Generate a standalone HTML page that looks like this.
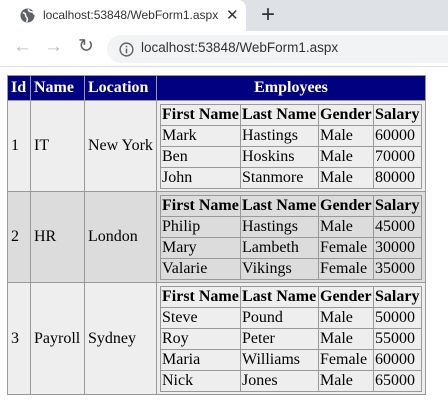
<!DOCTYPE html>
<html><head><style>
*{box-sizing:border-box}
body{margin:0;width:448px;height:405px;overflow:hidden;background:#fff;font-family:"Liberation Serif",serif;font-size:16px;position:relative}
.tabbar{position:absolute;left:0;top:0;width:448px;height:31px;background:#dee1e6}
.tab{position:absolute;left:0;top:0;width:246px;height:31px;background:#fff;border-radius:0 8px 0 0}
.toolbar{position:absolute;left:0;top:31px;width:448px;height:36px;background:#fff;border-bottom:1px solid #dadce0}
.omni{position:absolute;left:107px;top:4px;width:360px;height:28px;border-radius:14px;background:#f1f3f4}
.ui{font-family:"Liberation Sans",sans-serif;font-size:12px;color:#3c4043;position:absolute;white-space:nowrap}
table.o{position:absolute;left:7px;top:75px;border-collapse:collapse;table-layout:fixed;width:419px}
table.o td,table.o th{border:1px solid #999;padding:0 3px;text-align:left}
table.o th{background:#000080;color:#fff;height:25px;font-weight:bold}
.r1 td{background:#eee}.r2 td{background:#dcdcdc}
table.i{border-collapse:collapse;table-layout:fixed;width:262px;border:1px solid #999}
table.i td,table.i th{border:1px solid #999;padding:0 1px;height:21px;background:transparent;color:#000;text-align:left;line-height:18px;overflow:hidden}
table.i th{white-space:nowrap}
</style></head><body>
<div class="tabbar"><div class="tab"></div>
<svg style="position:absolute;left:20px;top:8px" width="15" height="15" viewBox="0 0 16 16"><circle cx="8" cy="8" r="7.5" fill="#5f6368"/><path d="M3 5c2 0 3 1 3 3s2 2 2 4l-1 3M9 1c0 2 1 3 3 3s3 2 3 3" stroke="#fff" stroke-width="1.6" fill="none"/></svg>
<div class="ui" style="left:43px;top:8px;color:#333">localhost:53848/WebForm1.aspx</div>
<div class="ui" style="left:226px;top:6px;font-size:15px;color:#333">✕</div>
<div class="ui" style="left:261px;top:1px;font-size:24px;color:#333">+</div>
</div>
<div class="toolbar"><div class="omni"></div>
<div class="ui" style="left:13px;top:5px;font-size:19px;color:#bbb">←</div>
<div class="ui" style="left:44px;top:5px;font-size:19px;color:#bbb">→</div>
<div class="ui" style="left:78px;top:4px;font-size:19px;color:#5f6368">↻</div>
<svg style="position:absolute;left:119px;top:11px" width="15" height="15" viewBox="0 0 16 16"><circle cx="8" cy="8" r="6.8" stroke="#5f6368" stroke-width="1.5" fill="none"/><rect x="7.2" y="7" width="1.6" height="5" fill="#5f6368"/><rect x="7.2" y="4" width="1.6" height="1.6" fill="#5f6368"/></svg>
<div class="ui" style="left:141px;top:9px;font-size:13.5px;color:#333">localhost:53848/WebForm1.aspx</div>
</div>
<table class="o">
<colgroup><col style="width:23px"><col style="width:54px"><col style="width:72px"><col></colgroup>
<tr><th>Id</th><th>Name</th><th>Location</th><th style="text-align:center">Employees</th></tr>
<tr class="r1" style="height:91px"><td>1</td><td>IT</td><td>New York</td><td>
<table class="i"><colgroup><col style="width:80px"><col style="width:78px"><col style="width:55px"><col></colgroup>
<tr><th>First Name</th><th>Last Name</th><th>Gender</th><th>Salary</th></tr>
<tr><td>Mark</td><td>Hastings</td><td>Male</td><td>60000</td></tr>
<tr><td>Ben</td><td>Hoskins</td><td>Male</td><td>70000</td></tr>
<tr><td>John</td><td>Stanmore</td><td>Male</td><td>80000</td></tr></table></td></tr>
<tr class="r2" style="height:91px"><td>2</td><td>HR</td><td>London</td><td>
<table class="i"><colgroup><col style="width:80px"><col style="width:78px"><col style="width:55px"><col></colgroup>
<tr><th>First Name</th><th>Last Name</th><th>Gender</th><th>Salary</th></tr>
<tr><td>Philip</td><td>Hastings</td><td>Male</td><td>45000</td></tr>
<tr><td>Mary</td><td>Lambeth</td><td>Female</td><td>30000</td></tr>
<tr><td>Valarie</td><td>Vikings</td><td>Female</td><td>35000</td></tr></table></td></tr>
<tr class="r1" style="height:112px"><td>3</td><td>Payroll</td><td>Sydney</td><td>
<table class="i"><colgroup><col style="width:80px"><col style="width:78px"><col style="width:55px"><col></colgroup>
<tr><th>First Name</th><th>Last Name</th><th>Gender</th><th>Salary</th></tr>
<tr><td>Steve</td><td>Pound</td><td>Male</td><td>50000</td></tr>
<tr><td>Roy</td><td>Peter</td><td>Male</td><td>55000</td></tr>
<tr><td>Maria</td><td>Williams</td><td>Female</td><td>60000</td></tr>
<tr><td>Nick</td><td>Jones</td><td>Male</td><td>65000</td></tr></table></td></tr>
</table>
</body></html>
